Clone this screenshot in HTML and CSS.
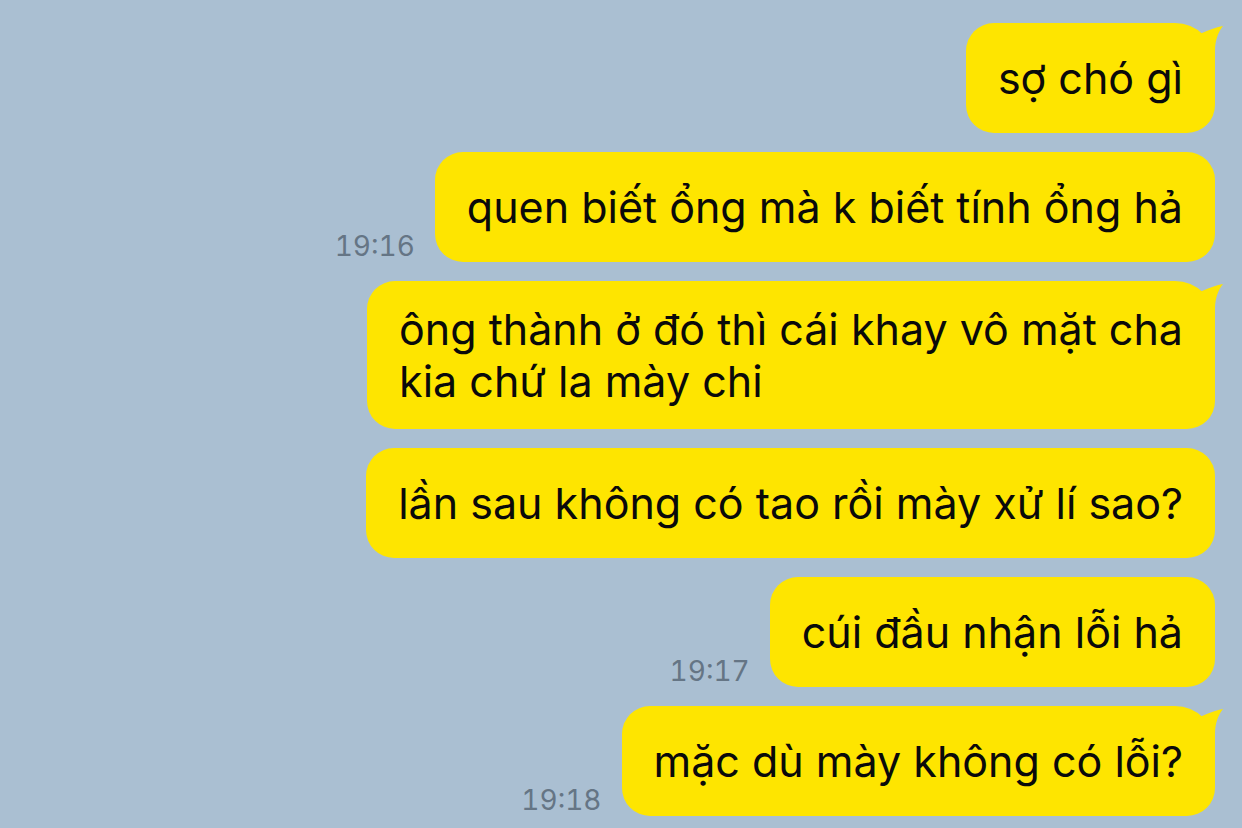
FILE: index.html
```html
<!DOCTYPE html>
<html lang="vi">
<head>
<meta charset="utf-8">
<title>Chat</title>
<link rel="stylesheet" href="styles.css">
</head>
<body>
<div class="chat">
  <div class="row">
    <div class="bubble tail">sợ chó gì<svg class="tail-svg" viewBox="-30 0 40 44" width="40" height="44"><path d="M -13 10 C -6 7 2 4 8 3 C 4 8 0 16 0 28 L 0 44 L -22 44 L -22 12 Z"/></svg></div>
  </div>
  <div class="row">
    <span class="time">19:16</span>
    <div class="bubble">quen biết ổng mà k biết tính ổng hả</div>
  </div>
  <div class="row">
    <div class="bubble tail multi">ông thành ở đó thì cái khay vô mặt cha<br>kia chứ la mày chi<svg class="tail-svg" viewBox="-30 0 40 44" width="40" height="44"><path d="M -13 10 C -6 7 2 4 8 3 C 4 8 0 16 0 28 L 0 44 L -22 44 L -22 12 Z"/></svg></div>
  </div>
  <div class="row">
    <div class="bubble">lần sau không có tao rồi mày xử lí sao?</div>
  </div>
  <div class="row">
    <span class="time">19:17</span>
    <div class="bubble">cúi đầu nhận lỗi hả</div>
  </div>
  <div class="row">
    <span class="time">19:18</span>
    <div class="bubble tail">mặc dù mày không có lỗi?<svg class="tail-svg" viewBox="-30 0 40 44" width="40" height="44"><path d="M -13 10 C -6 7 2 4 8 3 C 4 8 0 16 0 28 L 0 44 L -22 44 L -22 12 Z"/></svg></div>
  </div>
</div>
</body>
</html>
```

FILE: styles.css
```css
html, body {
  margin: 0;
  padding: 0;
  background: #aabfd2;
}

body {
  width: 1242px;
  height: 828px;
  overflow: hidden;
  font-family: Inter, "Noto Sans", sans-serif;
}

.chat {
  display: flex;
  flex-direction: column;
  align-items: flex-end;
  gap: 19px;
  padding: 23px 27px 0 0;
}

.row {
  display: flex;
  align-items: flex-end;
  gap: 20px;
}

.time {
  font-size: 28px;
  line-height: 28px;
  font-variant-numeric: tabular-nums;
  color: #657585;
  padding-bottom: 2px;
}

.bubble {
  position: relative;
  box-sizing: border-box;
  min-height: 110px;
  display: flex;
  align-items: center;
  padding: 22px 32px;
  background: #fee500;
  border-radius: 28px;
  color: #0a0a0a;
  font-size: 43px;
  line-height: 52px;
  white-space: nowrap;
}

.bubble.tail {
  border-top-right-radius: 40px;
}

.bubble.multi {
  display: block;
}

.tail-svg {
  position: absolute;
  top: 0;
  right: -10px;
  fill: #fee500;
}
```
